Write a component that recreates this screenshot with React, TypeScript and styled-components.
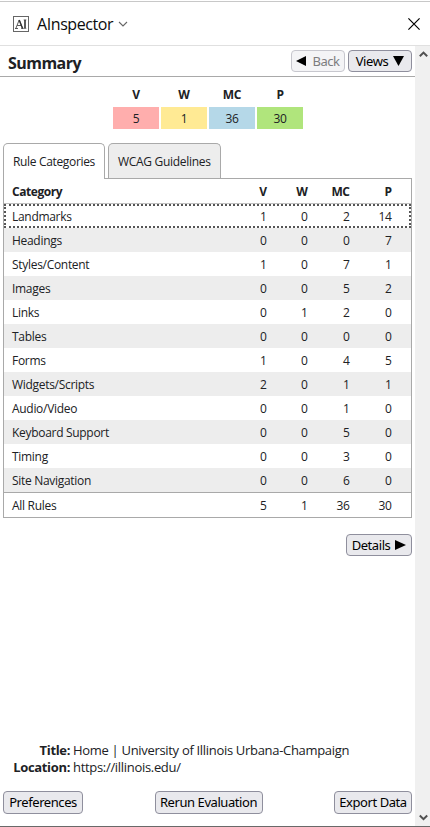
import React from 'react';
import styled, { createGlobalStyle, css } from 'styled-components';

const Global = createGlobalStyle`
  * { box-sizing: border-box; }
  body { margin: 0; background: #fff; color: #202124; font: 12px/16px "Open Sans", "Noto Sans", sans-serif; letter-spacing: -0.3px; }
`;

const Panel = styled.div`
  display: flex;
  flex-direction: column;
  height: 827px;
  border-bottom: 1px solid #696969;
`;
const TitleBar = styled.header`
  display: flex;
  align-items: center;
  height: 46px;
  padding: 3px 10px 0 13px;
  border-bottom: 1px solid #e0e0e0;
  background: linear-gradient(#c8c8c8, #c8c8c8) 0 1px / 100% 1px no-repeat;
`;
const LogoSvg = styled.svg`
  width: 16px;
  height: 16px;
  margin-right: 8px;
`;
const PanelName = styled.span`
  width: 76px;
  font-size: 16px;
  line-height: 22px;
  letter-spacing: -0.42px;
  color: #0c0c0d;
  white-space: nowrap;
`;
const Chevron = styled.svg`
  width: 10px;
  height: 6px;
  margin-left: 5px;
`;
const CloseIcon = styled.svg`
  width: 12px;
  height: 12px;
  margin-left: auto;
`;
const Body = styled.div`
  display: flex;
  flex: 1;
  min-height: 0;
`;
const Main = styled.main`
  display: flex;
  flex-direction: column;
  width: 415px;
`;
const Scrollbar = styled.div`
  display: flex;
  flex-direction: column;
  justify-content: space-between;
  align-items: center;
  width: 15px;
  padding: 5px 0;
  background: #f0f0f0;
`;
const Arrow = styled.svg`
  width: 9px;
  height: 7px;
  margin-left: 2px;
`;
const SummaryBar = styled.div`
  display: flex;
  align-items: center;
  gap: 3px;
  height: 31px;
  padding: 0 3px 0 8px;
  border-bottom: 1px solid #a9a9a9;
`;
const Heading = styled.h1`
  flex: 1;
  margin: 3px 0 0;
  font-size: 16px;
  line-height: 22px;
  letter-spacing: -0.55px;
`;
const Button = styled.button<{ $w: number; $tall?: boolean }>`
  display: flex;
  align-items: center;
  justify-content: center;
  gap: 5px;
  width: ${p => p.$w}px;
  height: ${p => (p.$tall ? 23 : 22)}px;
  padding: 0 0 ${p => (p.$tall ? 2 : 0)}px;
  border: 1px solid #8f8f9d;
  border-radius: 4px;
  background: #e9e9ed;
  color: #000;
  font: 13px/18px "Noto Sans", sans-serif;
  letter-spacing: -0.43px;
  white-space: nowrap;
  &:disabled { border-color: #c7c7ce; background: #f4f4f6; color: #7c7c7e; }
`;
const Triangle = styled.svg`
  width: 11px;
  height: 10px;
`;
const Scores = styled.div`
  display: grid;
  grid-template-columns: repeat(4, 46px);
  column-gap: 2px;
  margin: 10px 0 0 113px;
  text-align: center;
`;
const ScoreLabel = styled.div`
  height: 20px;
  font-weight: 700;
`;
const Score = styled.div<{ $bg: string }>`
  height: 22px;
  padding-top: 4px;
  background: ${p => p.$bg};
`;
const Tabs = styled.div`
  display: flex;
  gap: 3px;
  height: 36px;
  margin: 14px 0 -1px 3px;
`;
const Tab = styled.div<{ $w: number; $active?: boolean }>`
  width: ${p => p.$w}px;
  height: ${p => (p.$active ? 36 : 35)}px;
  padding: 10px 0 0 9px;
  border: 1px solid #a9a9a9;
  border-bottom: 0;
  border-radius: 5px 5px 0 0;
  background: ${p => (p.$active ? '#fff' : '#ededed')};
  ${p => p.$active && css`position: relative; letter-spacing: -0.34px;`}
`;
const Table = styled.div`
  width: 409px;
  height: 340px;
  margin-left: 3px;
  border: 1px solid #a9a9a9;
`;
const Row = styled.div<{ $kind?: 'head' | 'total'; $shade?: boolean; $focus?: boolean }>`
  display: grid;
  grid-template-columns: 213.5px 41px 41px 42px 42px;
  align-items: center;
  height: ${p => (p.$kind ? 25 : 24)}px;
  padding: 2px 0 0 8px;
  background: ${p => (p.$shade ? '#ededed' : '#fff')};
  ${p => p.$kind === 'head' && css`border-bottom: 1px solid #c0c0c0; font-weight: 700; letter-spacing: -0.45px;`}
  ${p => p.$kind === 'total' && css`border-top: 1px solid #a9a9a9;`}
  ${p => p.$focus && css`outline: 2px dotted #555; outline-offset: -2px;`}
`;
const Num = styled.span`
  text-align: right;
`;
const Label = styled.span`
  white-space: nowrap;
`;
const DetailsRow = styled.div`
  display: flex;
  justify-content: flex-end;
  margin: 16px 3px 0 0;
`;
const PageInfo = styled.dl`
  display: grid;
  grid-template-columns: 67px 1fr;
  column-gap: 3px;
  margin: auto 0 15px 3px;
  font-size: 13px;
  line-height: 17px;
  white-space: nowrap;
`;
const Term = styled.dt`
  font-weight: 700;
  text-align: right;
  letter-spacing: -0.35px;
`;
const Detail = styled.dd`
  margin: 0;
  letter-spacing: -0.31px;
`;
const Footer = styled.footer`
  display: flex;
  justify-content: space-between;
  padding: 0 3px 12px;
`;

const scores = [['V', 5, '#ffaead'], ['W', 1, '#ffea94'], ['MC', 36, '#b5d8e8'], ['P', 30, '#b0e57c']] as const;
const rows: [string, ...number[]][] = [
  ['Landmarks', 1, 0, 2, 14],
  ['Headings', 0, 0, 0, 7],
  ['Styles/Content', 1, 0, 7, 1],
  ['Images', 0, 0, 5, 2],
  ['Links', 0, 1, 2, 0],
  ['Tables', 0, 0, 0, 0],
  ['Forms', 1, 0, 4, 5],
  ['Widgets/Scripts', 2, 0, 1, 1],
  ['Audio/Video', 0, 0, 1, 0],
  ['Keyboard Support', 0, 0, 5, 0],
  ['Timing', 0, 0, 3, 0],
  ['Site Navigation', 0, 0, 6, 0],
];

const triangles = { left: 'M10 0v10L0 5z', right: 'M0 0v10l11-5z', down: 'M0 0h11L5.5 10z' };
const Tri = ({ dir }: { dir: keyof typeof triangles }) => (
  <Triangle viewBox="0 0 11 10"><path d={triangles[dir]} fill="#000" /></Triangle>
);

export default function App() {
  return (
    <>
      <Global />
      <Panel>
        <TitleBar>
          <LogoSvg viewBox="0 0 16 16" fill="none" stroke="#333">
            <rect x=".5" y=".5" width="15" height="15" stroke="#666" />
            <path d="M2 12.5h3M2.8 12.5 6.2 4l3.5 8.5M4.2 9.5h4" strokeWidth=".8" />
            <path d="m6.2 4 3.4 8.5" strokeWidth="1.4" />
            <path d="M12 4v8" strokeWidth="1.6" />
            <path d="M10.7 3.9h2.6M10.7 12.4h2.6M8 12.4h2.6" strokeWidth=".7" />
          </LogoSvg>
          <PanelName>AInspector</PanelName>
          <Chevron viewBox="0 0 10 6"><path d="m1 1 4 4 4-4" fill="none" stroke="#666" strokeWidth="1.1" /></Chevron>
          <CloseIcon viewBox="0 0 12 12"><path d="m.4.4 11.2 11.2M11.6.4.4 11.6" stroke="#000" strokeWidth="1.2" /></CloseIcon>
        </TitleBar>
        <Body>
          <Main>
            <SummaryBar>
              <Heading>Summary</Heading>
              <Button $w={54} disabled><Tri dir="left" />Back</Button>
              <Button $w={64}>Views<Tri dir="down" /></Button>
            </SummaryBar>
            <Scores>
              {scores.map(([label]) => <ScoreLabel key={label}>{label}</ScoreLabel>)}
              {scores.map(([label, value, color]) => <Score key={label} $bg={color}>{value}</Score>)}
            </Scores>
            <Tabs>
              <Tab $w={102} $active>Rule Categories</Tab>
              <Tab $w={113}>WCAG Guidelines</Tab>
            </Tabs>
            <Table>
              <Row $kind="head"><Label>Category</Label>{scores.map(([label]) => <Num key={label}>{label}</Num>)}</Row>
              {rows.map(([name, ...values], i) => (
                <Row key={name} $shade={i % 2 === 1} $focus={i === 0}>
                  <Label>{name}</Label>
                  {values.map((v, j) => <Num key={j}>{v}</Num>)}
                </Row>
              ))}
              <Row $kind="total"><Label>All Rules</Label>{scores.map(([label, value]) => <Num key={label}>{value}</Num>)}</Row>
            </Table>
            <DetailsRow><Button $w={66}>Details<Tri dir="right" /></Button></DetailsRow>
            <PageInfo>
              <Term>Title:</Term><Detail>Home | University of Illinois Urbana-Champaign</Detail>
              <Term>Location:</Term><Detail>https://illinois.edu/</Detail>
            </PageInfo>
            <Footer>
              <Button $w={80} $tall>Preferences</Button>
              <Button $w={108} $tall>Rerun Evaluation</Button>
              <Button $w={78} $tall>Export Data</Button>
            </Footer>
          </Main>
          <Scrollbar>
            <Arrow viewBox="0 0 9 7"><path d="m.8 5.3 3.7-3.7 3.7 3.7" fill="none" stroke="#505050" strokeWidth="2" /></Arrow>
            <Arrow viewBox="0 0 9 7"><path d="m.8 1.5 3.7 3.7 3.7-3.7" fill="none" stroke="#505050" strokeWidth="2" /></Arrow>
          </Scrollbar>
        </Body>
      </Panel>
    </>
  );
}
